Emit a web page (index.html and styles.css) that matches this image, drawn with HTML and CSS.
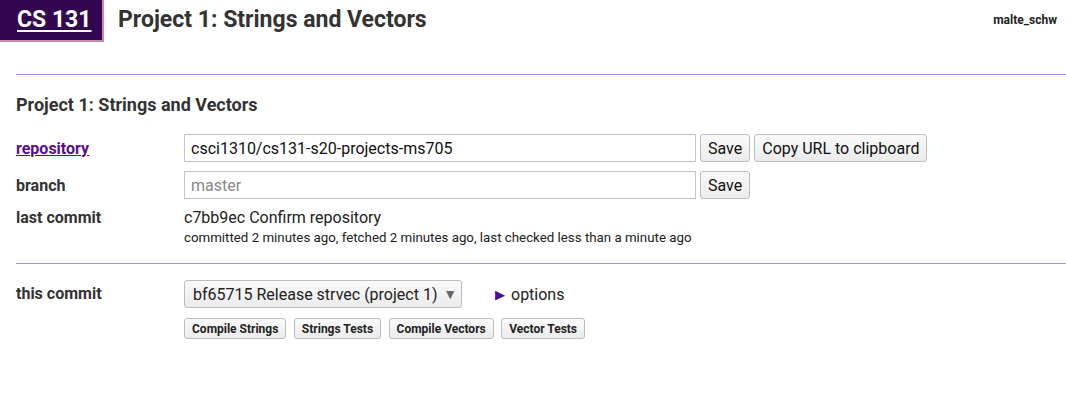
FILE: index.html
```html
<!DOCTYPE html>
<html>
<head>
<meta charset="utf-8">
<link rel="stylesheet" href="styles.css">
</head>
<body>
<header class="topbar">
  <a class="course" href="#">CS 131</a>
  <h1 class="title">Project 1: Strings and Vectors</h1>
  <div class="user">malte_schw</div>
</header>
<main class="content">
  <hr class="rule-top">
  <h2 class="pset-title">Project 1: Strings and Vectors</h2>
  <div class="grid">
    <div class="label"><a class="link" href="#">repository</a></div>
    <div class="value row">
      <input class="text-in" type="text" value="csci1310/cs131-s20-projects-ms705">
      <button class="btn">Save</button>
      <button class="btn">Copy URL to clipboard</button>
    </div>
    <div class="label">branch</div>
    <div class="value row">
      <input class="text-in" type="text" placeholder="master">
      <button class="btn">Save</button>
    </div>
    <div class="label lc">last commit</div>
    <div class="value lc">
      <div class="commit">c7bb9ec Confirm repository</div>
      <div class="meta">committed 2 minutes ago, fetched 2 minutes ago, last checked less than a minute ago</div>
    </div>
  </div>
  <hr class="rule-mid">
  <div class="grid">
    <div class="label tc">this commit</div>
    <div class="value">
      <div class="row">
        <div class="select">bf65715 Release strvec (project 1)<span class="caret">▼</span></div>
        <div class="options"><span class="tri">▶</span>options</div>
      </div>
      <div class="row small-row">
        <button class="btn sm">Compile Strings</button>
        <button class="btn sm">Strings Tests</button>
        <button class="btn sm">Compile Vectors</button>
        <button class="btn sm">Vector Tests</button>
      </div>
    </div>
  </div>
</main>
</body>
</html>
```
FILE: styles.css
```css
* { box-sizing: border-box; }
html, body { margin: 0; padding: 0; background: #fff; }
body {
  font-family: Roboto, "Liberation Sans", sans-serif;
  color: #333;
  width: 1066px;
  height: 413px;
  overflow: hidden;
}
.topbar {
  display: flex;
  align-items: flex-start;
  height: 42px;
}
.course {
  display: block;
  width: 104px;
  height: 42px;
  background: #33074f;
  border-right: 2px solid #c98aa9;
  border-bottom: 2px solid #c98aa9;
  color: #fff;
  font-weight: 700;
  font-size: 23px;
  line-height: 40px;
  padding-left: 17px;
  text-decoration: underline;
  text-decoration-thickness: 2px;
  text-underline-offset: 3px;
}
.title {
  margin: 0 0 0 14px;
  font-size: 23px;
  font-weight: 700;
  line-height: 40px;
  color: #333;
}
.user {
  margin-left: auto;
  margin-right: 9px;
  font-size: 12px;
  font-weight: 700;
  line-height: 40px;
  color: #222;
}
.content { padding: 0 0 0 16px; }
.rule-top {
  margin: 32px 0 0 0;
  border: 0;
  height: 1px;
  background: #a289d6;
}
.pset-title {
  margin: 19px 0 0 0;
  font-size: 18px;
  font-weight: 700;
  line-height: 22px;
}
.grid {
  display: grid;
  grid-template-columns: 168px 1fr;
  row-gap: 9px;
  align-items: center;
}
.pset-title + .grid { margin-top: 18px; }
.label {
  font-size: 16px;
  font-weight: 700;
  color: #333;
}
.link { color: #5c0c8c; text-decoration: underline; }
.row { display: flex; align-items: center; gap: 4px; }
.text-in {
  width: 512px;
  height: 28px;
  border: 1px solid #c5c5c5;
  padding: 0 6px;
  font-family: Roboto, "Liberation Sans", sans-serif;
  font-size: 16px;
  color: #111;
  margin: 0;
}
.text-in::placeholder { color: #888; }
.btn {
  height: 28px;
  border: 1px solid #bdbdbd;
  border-radius: 3px;
  background: linear-gradient(#fafafa, #ebebeb);
  font-family: Roboto, "Liberation Sans", sans-serif;
  font-size: 16px;
  color: #111;
  padding: 0 7px;
  margin: 0;
}
.lc { align-self: start; }
.label.lc { line-height: 20px; }
.commit { font-size: 16px; line-height: 20px; color: #222; }
.meta { font-size: 13.3px; line-height: 20px; color: #222; }
.rule-mid {
  margin: 15px 0 16px 0;
  border: 0;
  height: 1px;
  background: #a59fae;
}
.tc { align-self: start; line-height: 28px; }
.select {
  display: flex;
  align-items: center;
  width: 278px;
  height: 28px;
  border: 1px solid #bdbdbd;
  border-radius: 3px;
  background: linear-gradient(#fafafa, #ebebeb);
  font-size: 16px;
  color: #222;
  padding: 0 8px;
}
.caret { margin-left: auto; margin-right: -4px; font-size: 14px; color: #666; }
.options {
  margin-left: 29px;
  font-size: 16px;
  color: #222;
  display: flex;
  align-items: center;
}
.tri { color: #4a0e9e; font-size: 13px; margin-right: 6px; }
.small-row { margin-top: 10px; gap: 7.5px; }
.btn.sm {
  height: 21px;
  font-size: 12px;
  font-weight: 700;
  padding: 0 7px;
  color: #222;
}
```
